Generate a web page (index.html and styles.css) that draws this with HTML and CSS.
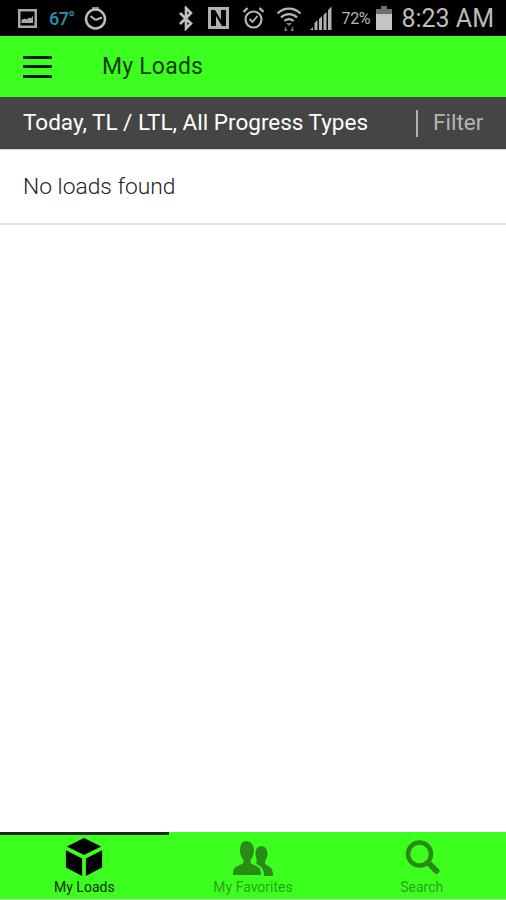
FILE: index.html
```html
<!DOCTYPE html>
<html>
<head>
<meta charset="UTF-8">
<title>My Loads</title>
<link rel="stylesheet" href="styles.css">
</head>
<body>
<div class="app">
    <div class="status-bar">
        <div class="status-left">
            <svg width="21" height="21" viewBox="0 0 21 21"><path d="M1 1h19v19H1z M3.500 3.500v14h14v-14z" fill="#a8a8a8" fill-rule="evenodd"/><path d="M4.500 15v-3l3-1.500 2 1 3-2 1.500 1 2-3V15z" fill="#a8a8a8"/></svg>
            <span class="temp">67°</span>
            <svg width="25" height="25" viewBox="0 0 25 25"><circle cx="12.500" cy="13" r="9.500" fill="none" stroke="#bcbcbc" stroke-width="2.500"/><path d="M9 2h7" stroke="#bcbcbc" stroke-width="1.500"/><path d="M12.500 14l6.500-2.500M12.500 14l-5-4" stroke="#bcbcbc" stroke-width="2" fill="none"/></svg>
        </div>
        <div class="status-right">
            <svg class="i-bt" width="16" height="25" viewBox="0 0 16 25"><path d="M2 7l11 10.500-5 5V2l5 5L2 18" fill="none" stroke="#c0c0c0" stroke-width="2.600"/></svg>
            <svg class="i-nfc" width="23" height="24" viewBox="0 0 23 24"><path d="M1 1h21v22H1z M4 4v16h5V10l6 10h4V4h-5v10L8 4z" fill="#b0b0b0" fill-rule="evenodd"/></svg>
            <svg class="i-alarm" width="23" height="24" viewBox="0 0 23 24"><circle cx="11.500" cy="13.500" r="8" fill="none" stroke="#b4b4b4" stroke-width="2.200"/><path d="M1.500 6l4-4M21.500 6l-4-4" stroke="#b4b4b4" stroke-width="2.400"/><path d="M7.500 13l3 3 5-6" fill="none" stroke="#b4b4b4" stroke-width="1.800"/></svg>
            <svg class="i-wifi" width="26" height="27" viewBox="0 0 26 27"><path d="M1.500 8.500C8 2 18 2 24.500 8.500M5 12.500c4.500-4.500 11.500-4.500 16 0M8.500 16c2.500-2.500 6.500-2.500 9 0" fill="none" stroke="#b4b4b4" stroke-width="2.200"/><path d="M10 18h6l-3 3zM9 21l2.500 5h-3zM17 21l-2.500 5h3z" fill="#7c7c7c"/></svg>
            <svg class="i-signal" width="24" height="25" viewBox="0 0 24 25"><path d="M1 24l3-3v3zM5.500 24v-7l3-3v10zM10 24V13l3-3v14zM14.500 24V9l3-3v18zM19 24V4l3.500-3.500V24z" fill="#b0b0b0"/></svg>
            <span class="battery-text">72%</span>
            <svg class="i-batt" width="16" height="24" viewBox="0 0 16 24"><path d="M5 0h6v3h5v21H0V3h5z" fill="#6f6f6f"/><path d="M0 8h16v16H0z" fill="#c4c4c4"/></svg>
            <span class="clock">8:23 AM</span>
        </div>
    </div>

    <div class="title-bar">
        <div class="menu-icon"><span></span><span></span><span></span></div>
        <div class="title-text">My Loads</div>
    </div>

    <div class="filter-bar">
        <div class="filter-summary">Today, TL / LTL, All Progress Types</div>
        <div class="filter-divider"></div>
        <div class="filter-button">Filter</div>
    </div>

    <div class="load-list">
        <div class="load-empty">No loads found</div>
    </div>

    <div class="tab-bar">
        <div class="tab tab-active">
            <svg width="40" height="40" viewBox="0 0 42 42"><path d="M21 1l18 9-18 9-18-9z" fill="#000"/><path d="M2 14l17 8.500V41L2 32z" fill="#000"/><path d="M40 14l-17 8.500V41l17-9z" fill="#000"/></svg>
            <div class="tab-label">My Loads</div>
        </div>
        <div class="tab">
            <svg width="42" height="38" viewBox="0 0 42 38"><path d="M14 2c5 0 8 4 8 10 0 4-2 7-3.500 9v3c2 2 8 3 9.500 6 .7 1.500 1 4 1 6H1c0-2 .3-4.500 1-6 1.500-3 7.500-4 9.500-6v-3C10 19 8 16 8 12c0-6 2-10 6-10z" fill="#2a8a16"/><path d="M29 7c4 0 6.500 3 6.500 8 0 3-1.500 5.500-2.500 7v3c2 1.500 5 2.500 6.500 4.500 1 1.500 1.500 5 1.500 7.500h-9c0-3-.5-6-2-8-1.500-1.800-4-3-5.500-4v-3c1-1.500-1-4-1-7 0-4 1.500-8 5.500-8z" fill="#2a8a16"/></svg>
            <div class="tab-label">My Favorites</div>
        </div>
        <div class="tab">
            <svg width="36" height="38" viewBox="0 0 36 38"><circle cx="15.500" cy="15" r="11.500" fill="none" stroke="#2a8a16" stroke-width="4.500"/><path d="M24.500 24l8 8" stroke="#2a8a16" stroke-width="6" stroke-linecap="round"/></svg>
            <div class="tab-label">Search</div>
        </div>
    </div>
</div>
</body>
</html>
```

FILE: styles.css
```css
html, body {
    margin: 0;
    padding: 0;
}

body {
    background-color: #fff;
    font-family: Roboto, "Liberation Sans", sans-serif;
}

.app {
    width: 506px;
    height: 900px;
    display: flex;
    flex-direction: column;
    overflow: hidden;
}

.status-bar {
    height: 36px;
    background-color: #000;
    display: flex;
    justify-content: space-between;
    align-items: center;
    padding: 0 12px 0 17px;
    box-sizing: border-box;
    flex-shrink: 0;
}

.status-left, .status-right {
    display: flex;
    align-items: center;
}

.temp {
    color: #2a8fb5;
    font-size: 18px;
    font-weight: 500;
    margin: 0 9px 0 11px;
    width: 25px;
    letter-spacing: -0.6px;
}

.status-right svg {
    display: block;
}

.i-nfc {
    margin-left: 13px;
}

.i-alarm {
    margin-left: 12px;
}

.i-wifi {
    margin-left: 11px;
}

.i-signal {
    margin-left: 7px;
}

.battery-text {
    color: #b4b4b4;
    font-size: 16px;
    margin-left: 8px;
    width: 35px;
    letter-spacing: -0.3px;
}

.clock {
    color: #bcbcbc;
    font-size: 25px;
    margin-left: 9px;
}

.title-bar {
    height: 61px;
    background-color: #3dff1f;
    display: flex;
    align-items: center;
    padding-left: 23px;
    flex-shrink: 0;
}

.menu-icon {
    width: 29px;
    display: flex;
    flex-direction: column;
    gap: 6.500px;
    margin-right: 50px;
}

.menu-icon span {
    display: block;
    height: 3px;
    background-color: #071a04;
    border-radius: 1px;
}

.title-text {
    color: #0c3d06;
    font-size: 23px;
    letter-spacing: 0.2px;
}

.filter-bar {
    height: 52px;
    background-color: #454545;
    display: flex;
    align-items: center;
    padding-left: 23px;
    border-bottom: 1px solid #d4d4d4;
    flex-shrink: 0;
}

.filter-summary {
    color: #fff;
    font-size: 22.500px;
    width: 393px;
    white-space: nowrap;
    padding-bottom: 2px;
}

.filter-divider {
    width: 2px;
    height: 27px;
    background-color: #b0b0b0;
}

.filter-button {
    color: #b5b5b5;
    font-size: 22.500px;
    margin-left: 15px;
    padding-bottom: 2px;
}

.load-list {
    flex: 1;
}

.load-empty {
    height: 73px;
    padding-left: 23px;
    display: flex;
    align-items: center;
    color: #222;
    font-size: 22.800px;
    font-weight: 300;
    border-bottom: 2px solid #e2e2e2;
}

.tab-bar {
    height: 68px;
    background-color: #3dff1f;
    display: flex;
    border-bottom: 1px solid #b8ffae;
    box-sizing: border-box;
    flex-shrink: 0;
}

.tab {
    flex: 1;
    display: flex;
    flex-direction: column;
    align-items: center;
    justify-content: flex-end;
    box-sizing: border-box;
    border-top: 3px solid transparent;
    color: #2f9f1b;
}

.tab-active {
    border-top-color: #1c2a1a;
    color: #0c2a08;
}

.tab-label {
    font-size: 14px;
    line-height: 16px;
    margin-top: 2px;
    margin-bottom: 4px;
}
```
